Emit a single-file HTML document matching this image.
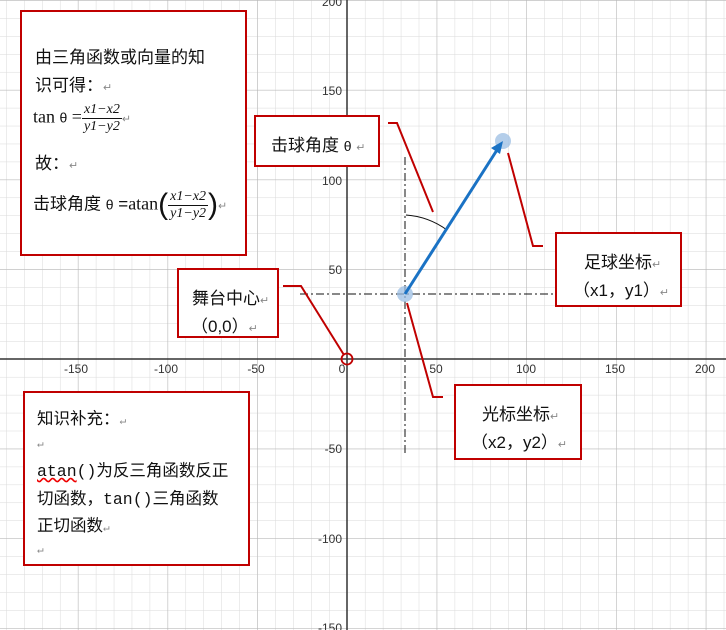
<!DOCTYPE html>
<html><head><meta charset="utf-8"><style>
body{margin:0;width:726px;height:630px;overflow:hidden;background:#fff;font-family:"Liberation Sans","Noto Sans CJK SC",sans-serif;}
.box{position:absolute;border:2.5px solid #c00000;background:#fff;box-sizing:border-box;color:#111;font-size:17px;}
.r{color:#888;font-size:11px;}
.t{position:absolute;white-space:nowrap;}
.frac{display:inline-block;vertical-align:middle;text-align:center;font-family:"Liberation Serif",serif;font-style:italic;font-size:14px;line-height:16px;}
.frac span{display:block;padding:0 2px;}
.frac span:first-child{border-bottom:1px solid #111;}
</style></head><body>
<svg width="726" height="630" style="position:absolute;left:0;top:0">
<defs>
<pattern id="mn" patternUnits="userSpaceOnUse" x="347" y="359" width="17.94" height="17.94"><path d="M0 0V17.94M0 0H17.94" stroke="#dadada" stroke-width="1" fill="none"/></pattern>
<pattern id="mj" patternUnits="userSpaceOnUse" x="347" y="359" width="89.7" height="89.7"><path d="M0 0V89.7M0 0H89.7" stroke="#b4b4b4" stroke-width="1" fill="none"/></pattern>
</defs>
<rect width="726" height="630" fill="url(#mn)"/>
<rect width="726" height="630" fill="url(#mj)"/>
<line x1="0" y1="359" x2="726" y2="359" stroke="#333" stroke-width="1.5"/>
<line x1="347" y1="0" x2="347" y2="630" stroke="#333" stroke-width="1.5"/>
<g font-family="Liberation Sans,sans-serif" font-size="12" fill="#333">
<text x="76" y="373" text-anchor="middle">-150</text>
<text x="166" y="373" text-anchor="middle">-100</text>
<text x="256" y="373" text-anchor="middle">-50</text>
<text x="342" y="373" text-anchor="middle">0</text>
<text x="436" y="373" text-anchor="middle">50</text>
<text x="526" y="373" text-anchor="middle">100</text>
<text x="615" y="373" text-anchor="middle">150</text>
<text x="705" y="373" text-anchor="middle">200</text>
<text x="342" y="6" text-anchor="end">200</text>
<text x="342" y="95" text-anchor="end">150</text>
<text x="342" y="185" text-anchor="end">100</text>
<text x="342" y="274" text-anchor="end">50</text>
<text x="342" y="453" text-anchor="end">-50</text>
<text x="342" y="543" text-anchor="end">-100</text>
<text x="342" y="632" text-anchor="end">-150</text>
</g>
<line x1="405" y1="157" x2="405" y2="455" stroke="#111" stroke-width="1" stroke-dasharray="8,3,2,3"/>
<line x1="300" y1="294" x2="555" y2="294" stroke="#111" stroke-width="1" stroke-dasharray="8,3,2,3"/>
<path d="M406 215 A79 79 0 0 1 447 230" stroke="#111" fill="none" stroke-width="1"/>
<circle cx="405" cy="294" r="8" fill="#9bbde3" opacity="0.75"/>
<circle cx="503" cy="141" r="8" fill="#9bbde3" opacity="0.75"/>
<line x1="405" y1="294" x2="497" y2="150" stroke="#1a72c4" stroke-width="3"/>
<path d="M503 141 L491 148 L500 154 Z" fill="#1a72c4"/>
<circle cx="347" cy="359" r="5.5" fill="none" stroke="#c00000" stroke-width="1.8"/>
<g stroke="#c00000" stroke-width="2" fill="none">
<polyline points="388,123 397,123 433,212"/>
<polyline points="283,286 301,286 344,355"/>
<polyline points="508,153 533,246 543,246"/>
<polyline points="407,303 433,397 443,397"/>
</g>
</svg>

<div class="box" style="left:20px;top:10px;width:227px;height:246px;">
<div class="t" style="left:13px;top:31px">由三角函数或向量的知</div>
<div class="t" style="left:13px;top:59px">识可得：<span class="r">↵</span></div>
<div class="t" style="left:11px;top:90px;font-family:'Liberation Serif',serif;font-size:18px">tan <span style="font-family:'Liberation Sans','Noto Sans CJK SC',sans-serif;font-size:14px">θ</span> =<span class="frac"><span>x1−x2</span><span>y1−y2</span></span><span class="r">↵</span></div>
<div class="t" style="left:13px;top:137px">故：<span class="r">↵</span></div>
<div class="t" style="left:11px;top:176px">击球角度 <span style="font-size:14px">θ</span> =<span style="font-family:'Liberation Serif',serif;font-size:18px">atan</span><span style="font-size:30px;font-weight:100;vertical-align:middle">(</span><span class="frac"><span>x1−x2</span><span>y1−y2</span></span><span style="font-size:30px;vertical-align:middle">)</span><span class="r">↵</span></div>
</div>

<div class="box" style="left:254px;top:115px;width:126px;height:52px;">
<div class="t" style="left:15px;top:14px">击球角度 <span style="font-size:14px">θ</span> <span class="r">↵</span></div>
</div>

<div class="box" style="left:177px;top:268px;width:102px;height:70px;">
<div class="t" style="left:13px;top:14px">舞台中心<span class="r">↵</span></div>
<div class="t" style="left:12px;top:42px">（0,0）<span class="r">↵</span></div>
</div>

<div class="box" style="left:555px;top:232px;width:127px;height:75px;">
<div class="t" style="left:27px;top:14px">足球坐标<span class="r">↵</span></div>
<div class="t" style="left:16px;top:42px">（x1，y1）<span class="r">↵</span></div>
</div>

<div class="box" style="left:454px;top:384px;width:128px;height:76px;">
<div class="t" style="left:26px;top:14px">光标坐标<span class="r">↵</span></div>
<div class="t" style="left:15px;top:42px">（x2，y2）<span class="r">↵</span></div>
</div>

<div class="box" style="left:23px;top:391px;width:227px;height:175px;font-family:'Liberation Mono','Noto Sans CJK SC',monospace;font-size:16.5px;">
<div class="t" style="left:12px;top:12px">知识补充：<span class="r">↵</span></div>
<div class="t" style="left:12px;top:40px"><span class="r">↵</span></div>
<div class="t" style="left:12px;top:64px"><span style="text-decoration:underline wavy #e00;">atan</span>()为反三角函数反正</div>
<div class="t" style="left:12px;top:92px">切函数，tan()三角函数</div>
<div class="t" style="left:12px;top:119px">正切函数<span class="r">↵</span></div>
<div class="t" style="left:12px;top:146px"><span class="r">↵</span></div>
</div>
</body></html>
